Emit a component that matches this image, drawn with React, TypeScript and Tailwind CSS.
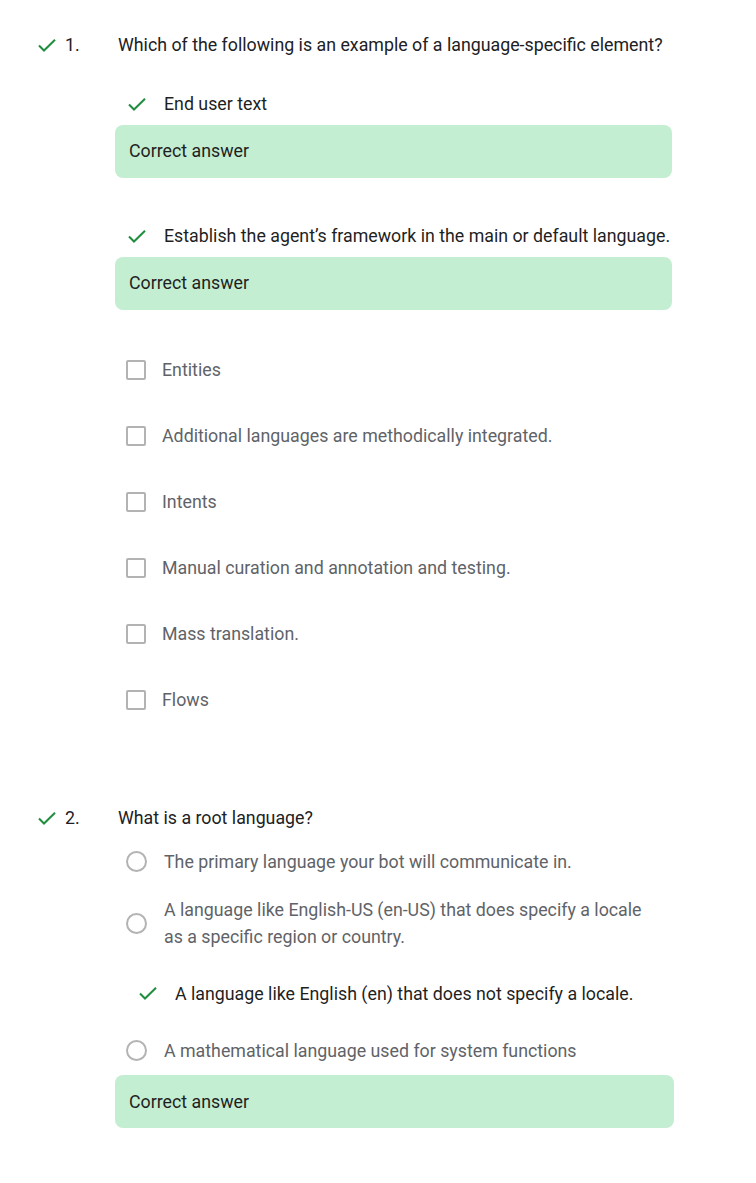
const Check = ({ className = "" }: { className?: string }) => (
  <svg width="18" height="13" viewBox="0 0 18 13" className={className} fill="none">
    <path d="M1 6.5 6 11.5 17 0.8" stroke="#1e8e3e" strokeWidth="2" />
  </svg>
)

const CorrectBox = ({ wide = false }: { wide?: boolean }) => (
  <div
    className={`${wide ? "w-[559px]" : "w-[557px]"} h-[53px] rounded-[8px] bg-[#c4eed1] flex items-center pl-[14px] text-[17.8px] text-[#1f1f1f]`}
  >
    Correct answer
  </div>
)

const CheckedRow = ({ text }: { text: string }) => (
  <div className="flex items-center h-[26px] pl-[13px] text-[17.8px] text-[#1f1f1f]">
    <Check />
    <span className="ml-[18px] whitespace-nowrap">{text}</span>
  </div>
)

const BoxRow = ({ text }: { text: string }) => (
  <div className="flex items-center h-[26px] pl-[11px] text-[17.8px] text-[#5f6368]">
    <span className="w-[20px] h-[20px] border-2 border-[#b3b3b3] rounded-[2px] shrink-0" />
    <span className="ml-[16px]">{text}</span>
  </div>
)

const Radio = () => (
  <span className="w-[21px] h-[21px] border-2 border-[#b3b3b3] rounded-full shrink-0" />
)

export default function App() {
  const boxes = [
    "Entities",
    "Additional languages are methodically integrated.",
    "Intents",
    "Manual curation and annotation and testing.",
    "Mass translation.",
    "Flows",
  ]

  return (
    <div className="w-[756px] min-h-[1183px] bg-white pl-[38px] pt-[32px] font-['Roboto',sans-serif]">
      {/* question 1 */}
      <div className="flex items-center h-[26px] text-[17.8px] text-[#202124]">
        <Check />
        <span className="ml-[9px] w-[53px]">1.</span>
        <span>Which of the following is an example of a language-specific element?</span>
      </div>

      <div className="ml-[77px]">
        <div className="mt-[33px]">
          <CheckedRow text="End user text" />
        </div>
        <div className="mt-[8px]">
          <CorrectBox />
        </div>

        <div className="mt-[45px]">
          <CheckedRow text="Establish the agent’s framework in the main or default language." />
        </div>
        <div className="mt-[8px]">
          <CorrectBox />
        </div>

        <div className="mt-[47px] flex flex-col gap-[40px]">
          {boxes.map((b) => (
            <BoxRow key={b} text={b} />
          ))}
        </div>
      </div>

      {/* question 2 */}
      <div className="mt-[92px] flex items-center h-[26px] text-[17.8px] text-[#202124]">
        <Check />
        <span className="ml-[9px] w-[53px]">2.</span>
        <span>What is a root language?</span>
      </div>

      <div className="ml-[77px] text-[17.8px] leading-[27px]">
        <div className="mt-[17px] flex items-center pl-[11px] text-[#5f6368]">
          <Radio />
          <span className="ml-[17px]">The primary language your bot will communicate in.</span>
        </div>
        <div className="mt-[21px] flex items-center pl-[11px] text-[#5f6368]">
          <Radio />
          <span className="ml-[17px]">
            A language like English-US (en-US) that does specify a locale
            <br />
            as a specific region or country.
          </span>
        </div>
        <div className="mt-[30px] flex items-center pl-[24px] text-[#1f1f1f]">
          <Check />
          <span className="ml-[18px]">A language like English (en) that does not specify a locale.</span>
        </div>
        <div className="mt-[30px] flex items-center pl-[11px] text-[#5f6368]">
          <Radio />
          <span className="ml-[17px]">A mathematical language used for system functions</span>
        </div>
        <div className="mt-[11px]">
          <CorrectBox wide />
        </div>
      </div>
    </div>
  )
}
